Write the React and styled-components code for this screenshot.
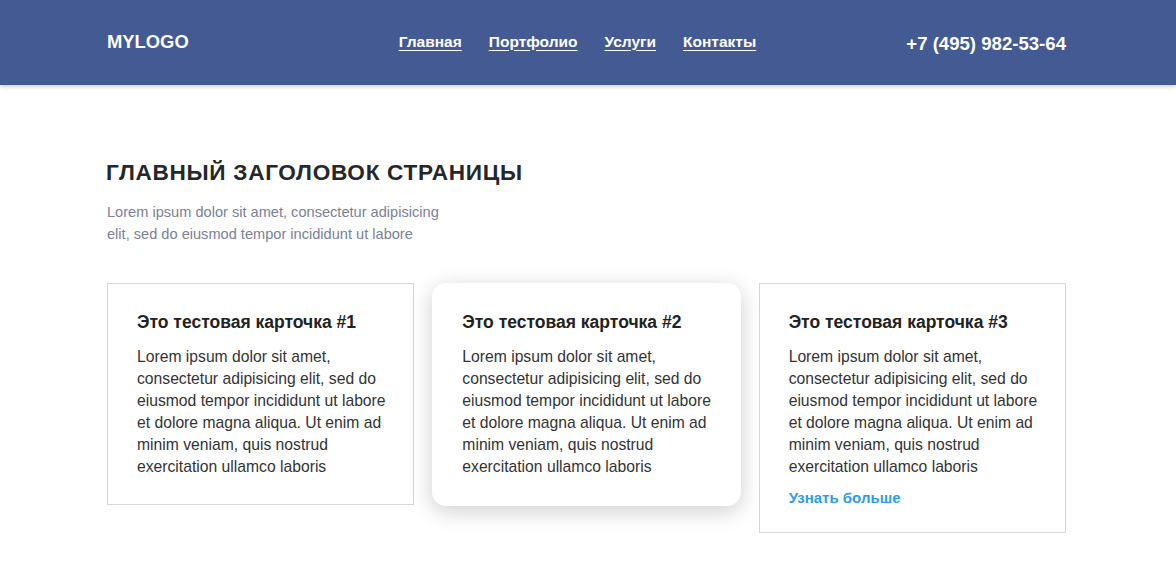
import React from "react";
import styled, { createGlobalStyle } from "styled-components";

const GlobalStyle = createGlobalStyle`
  body {
    margin: 0;
    background: #fff;
    font-family: "Liberation Sans", Arial, sans-serif;
  }
`;

const Header = styled.header`
  background: #445a93;
  height: 85px;
  box-shadow: 0 2px 4px rgba(0, 0, 0, 0.18);
`;

const Container = styled.div`
  width: 959px;
  margin-left: calc(50% - 481px);
`;

const HeaderInner = styled(Container)`
  display: flex;
  align-items: center;
  height: 100%;
`;

const Logo = styled.div`
  color: #fff;
  font-size: 18.4px;
  font-weight: bold;
  margin-top: -2px;
`;

const Nav = styled.nav`
  display: flex;
  gap: 27px;
  margin-left: 210px;
  margin-top: -2px;
`;

const NavLink = styled.a`
  color: #fff;
  font-size: 15.5px;
  font-weight: bold;
  text-decoration: underline;
  text-underline-offset: 3px;
`;

const Phone = styled.div`
  margin-left: auto;
  margin-top: 2px;
  color: #fff;
  font-size: 18.6px;
  font-weight: bold;
`;

const Main = styled(Container)`
  padding-top: 75px;
`;

const Title = styled.h1`
  margin: 0 0 0 -1px;
  font-size: 22.6px;
  line-height: 26px;
  text-transform: uppercase;
  color: #25272b;
  letter-spacing: 0.7px;
`;

const Lead = styled.p`
  margin: 15px 0 0;
  width: 340px;
  font-size: 14.6px;
  line-height: 22px;
  color: #7b8096;
`;

const Cards = styled.div`
  display: flex;
  align-items: flex-start;
  gap: 18px;
  margin-top: 38px;
`;

const Card = styled.div`
  flex: 1;
  box-sizing: border-box;
  background: #fff;
  padding: ${(p) => (p.$raised ? "29px 22px 28px 30px" : "28px 20px 26px 29px")};
  border: ${(p) => (p.$raised ? "none" : "1px solid #d6d6d6")};
  border-radius: ${(p) => (p.$raised ? "14px" : "0")};
  box-shadow: ${(p) => (p.$raised ? "0 5px 22px rgba(0, 0, 0, 0.2)" : "none")};
`;

const CardTitle = styled.h3`
  margin: 0;
  font-size: 17.5px;
  line-height: 20px;
  font-weight: bold;
  color: #222;
`;

const CardText = styled.p`
  margin: 14px 0 0;
  font-size: 15.7px;
  line-height: 22px;
  color: #333;
`;

const More = styled.a`
  display: block;
  margin-top: 11px;
  margin-bottom: -1px;
  font-size: 15px;
  line-height: 18px;
  font-weight: bold;
  color: #2f9ce6;
`;

const lorem =
  "Lorem ipsum dolor sit amet, consectetur adipisicing elit, sed do eiusmod tempor incididunt ut labore et dolore magna aliqua. Ut enim ad minim veniam, quis nostrud exercitation ullamco laboris";

export default function App() {
  return (
    <>
      <GlobalStyle />
      <Header>
        <HeaderInner>
          <Logo>MYLOGO</Logo>
          <Nav>
            <NavLink>Главная</NavLink>
            <NavLink>Портфолио</NavLink>
            <NavLink>Услуги</NavLink>
            <NavLink>Контакты</NavLink>
          </Nav>
          <Phone>+7 (495) 982-53-64</Phone>
        </HeaderInner>
      </Header>
      <Main>
        <Title>Главный заголовок страницы</Title>
        <Lead>
          Lorem ipsum dolor sit amet, consectetur adipisicing elit, sed do
          eiusmod tempor incididunt ut labore
        </Lead>
        <Cards>
          <Card>
            <CardTitle>Это тестовая карточка #1</CardTitle>
            <CardText>{lorem}</CardText>
          </Card>
          <Card $raised>
            <CardTitle>Это тестовая карточка #2</CardTitle>
            <CardText>{lorem}</CardText>
          </Card>
          <Card>
            <CardTitle>Это тестовая карточка #3</CardTitle>
            <CardText>{lorem}</CardText>
            <More>Узнать больше</More>
          </Card>
        </Cards>
      </Main>
    </>
  );
}
